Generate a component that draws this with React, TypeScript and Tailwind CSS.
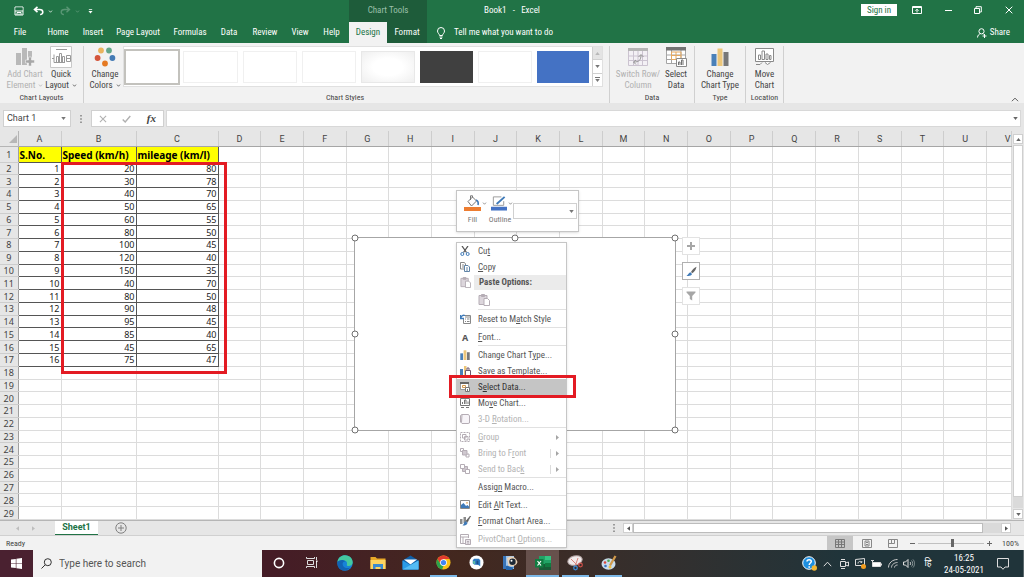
import type { ReactNode } from "react";
import clsx from "clsx";

const speed = [20, 30, 40, 50, 60, 80, 100, 120, 150, 40, 80, 90, 95, 85, 45, 75];
const mileage = [80, 78, 70, 65, 55, 50, 45, 40, 35, 70, 50, 48, 45, 40, 65, 47];
const columns = "ABCDEFGHIJKLMNOPQRSTUV".split("");
const rows = Array.from({ length: 29 }, (_, i) => i + 1);

export default function App() {
  return (
    <div className="relative flex h-screen min-h-[577px] flex-col overflow-hidden bg-[#e6e6e6] font-['Roboto_Condensed','Noto_Sans',sans-serif] text-[9px] leading-[11px] text-[#444]">
      <TitleBar />
      <TabStrip />
      <Ribbon />
      <FormulaBar />
      <div className="flex min-h-0 flex-1">
        <Sheet />
        <VerticalScroll />
      </div>
      <SheetTabs />
      <StatusBar />
      <Taskbar />

      {/* floating over the grid */}
      <ChartFrame />
      <MiniToolbar />
      <ContextMenu />
      <div className="pointer-events-none absolute top-[162px] left-[61px] h-[212px] w-[166px] border-3 border-[#e31b23]" />
      <div className="pointer-events-none absolute top-[375px] left-[449px] h-[23px] w-[127px] border-3 border-[#e31b23]" />
    </div>
  );
}

function Caret({ className }: { className?: string }) {
  return (
    <svg viewBox="0 0 6 4" className={clsx("h-[3px] w-[5px] shrink-0", className)} fill="none" stroke="currentColor">
      <path d="M1 .8 3 3 5 .8" />
    </svg>
  );
}

function Triangle({ className }: { className?: string }) {
  return (
    <svg viewBox="0 0 6 4" className={clsx("h-[3px] w-[5px] shrink-0", className)} fill="currentColor">
      <path d="M0 0h6L3 4z" />
    </svg>
  );
}

function TitleBar() {
  return (
    <header className="flex h-[22px] shrink-0 items-stretch bg-[#217346] text-white">
      <div className="flex w-[349px] items-center pl-[14px]">
        <button aria-label="Save">
          <svg viewBox="0 0 10 10" className="size-[10px]" fill="none" stroke="#fff">
            <path d="M1 1h8v8H1z" />
            <path d="M1.500 1.500h7v3h-7z" fill="#217346" stroke="none" />
            <path d="M1 5h8M3 9V6.500h4V9" />
            <path d="M4.500 7.500h1V9h-1z" fill="#fff" stroke="none" />
          </svg>
        </button>
        <button aria-label="Undo" className="ml-[9px]">
          <svg viewBox="0 0 11 10" className="h-[10px] w-[11px]" fill="none" stroke="#fff" strokeWidth="1.600">
            <path d="M4.500.8 1.500 3.500l3 2.700M1.800 3.500h4.700c4.400 0 4.200 5 .6 5" />
          </svg>
        </button>
        <Caret className="ml-[4px]" />
        <button aria-label="Redo" className="ml-[7px] opacity-25">
          <svg viewBox="0 0 11 10" className="h-[10px] w-[11px]" fill="none" stroke="#fff" strokeWidth="1.400">
            <path d="m6.500.8 3 2.700-3 2.700M9.200 3.500H4.500c-4.400 0-4.200 5-.6 5" />
          </svg>
        </button>
        <Caret className="ml-[4px] opacity-30" />
        <svg viewBox="0 0 6 6" className="ml-[8px] size-[5px]" fill="#fff">
          <path d="M1 0h4v1H1zM.5 2.500h5L3 5.500z" />
        </svg>
      </div>
      <div className="flex w-[78px] items-center justify-center bg-[#1e5c3a] pb-[2px] text-[#9cc0aa]">Chart Tools</div>
      <h1 className="flex w-[170px] items-center justify-center pb-[2px] whitespace-pre">Book1   -   Excel</h1>
      <div className="flex flex-1 items-center justify-end pb-[2px]">
        <button className="h-[12px] w-[36px] bg-white text-[#217346]">Sign in</button>
        <button aria-label="Ribbon display options" className="ml-[14px] flex w-[12px] justify-center">
          <svg viewBox="0 0 10 8" className="h-[8px] w-[10px]" fill="none" stroke="#fff">
            <path d="M.5.5h9v7h-9zM.5 1.500h9M5 6.500v-3M3.500 4.700 5 3.200l1.500 1.500" />
          </svg>
        </button>
        <button aria-label="Minimize" className="ml-[20px] flex w-[10px] justify-center">
          <span className="h-px w-[7px] bg-white" />
        </button>
        <button aria-label="Restore" className="ml-[20px] flex w-[10px] justify-center">
          <svg viewBox="0 0 8 8" className="size-[8px]" fill="none" stroke="#fff">
            <path d="M.5 2.500h5v5h-5zM2 2.500V.7h5.300V6H5.500" />
          </svg>
        </button>
        <button aria-label="Close" className="mr-[10px] ml-[21px] flex w-[10px] justify-center">
          <svg viewBox="0 0 8 8" className="size-[8px]" fill="none" stroke="#fff">
            <path d="m.7.7 6.600 6.600m0-6.600L.7 7.300" />
          </svg>
        </button>
      </div>
    </header>
  );
}

const tabs = [
  ["File", "w-[40px]"],
  ["Home", "w-[36px]"],
  ["Insert", "w-[34px]"],
  ["Page Layout", "w-[56px]"],
  ["Formulas", "w-[48px]"],
  ["Data", "w-[30px]"],
  ["Review", "w-[42px]"],
  ["View", "w-[28px]"],
  ["Help", "w-[35px]"],
];

function TabStrip() {
  return (
    <nav className="flex h-[21px] shrink-0 items-stretch bg-[#217346] text-white">
      {tabs.map(([label, width]) => (
        <button key={label} className={clsx("shrink-0 whitespace-nowrap", width)}>
          {label}
        </button>
      ))}
      <button className="w-[38px] bg-[#f2f2f2] text-[#217346]">Design</button>
      <button className="w-[40px] bg-[#1e5c3a]">Format</button>
      <button className="ml-[9px] flex items-center gap-[8px]">
        <svg viewBox="0 0 10 12" className="h-[12px] w-[10px]" fill="none" stroke="#fff">
          <path d="M3.500 8.500C3.500 6.800 1.500 6.200 1.500 4a3.500 3.500 0 0 1 7 0c0 2.200-2 2.800-2 4.500zM3.500 10h3M4 11.500h2" />
        </svg>
        Tell me what you want to do
      </button>
      <button className="mr-[14px] ml-auto flex items-center gap-[3px]">
        <svg viewBox="0 0 10 10" className="size-[10px]" fill="none" stroke="#fff">
          <circle cx="4.500" cy="3.300" r="2.600" />
          <path d="M.5 9.500C.7 7.300 2 6 3.500 5.700M5.500 5.700l1 .6M7.500 6v4M5.500 8h4" />
        </svg>
        Share
      </button>
    </nav>
  );
}

function Group({ label, className, children }: { label: string; className: string; children: ReactNode }) {
  return (
    <section className={clsx("flex flex-col border-r border-[#d0d0d0] text-center", className)}>
      <div className="flex flex-1 justify-center">{children}</div>
      <div className="text-[8px] leading-[10px]">{label}</div>
    </section>
  );
}

function BigButton({
  icon,
  lines,
  className,
  disabled,
  menu,
}: {
  icon: ReactNode;
  lines: [string, string];
  className: string;
  disabled?: boolean;
  menu?: boolean;
}) {
  return (
    <button
      disabled={disabled}
      className={clsx("flex shrink-0 flex-col items-center whitespace-nowrap", className, disabled && "text-[#b1b1b1]")}
    >
      <span className="mb-[1px] flex h-[22px] items-center">{icon}</span>
      <span>{lines[0]}</span>
      <span className="flex items-center gap-[3px]">
        {lines[1]}
        {menu && <Caret />}
      </span>
    </button>
  );
}

const styleThumbs = [
  "bg-white outline-2 outline-[#c3c2bd]",
  "bg-white border border-[#f0f0f0]",
  "bg-white border border-[#f0f0f0]",
  "bg-white border border-[#f0f0f0]",
  "bg-radial from-white from-40% to-[#efefef] border border-[#e8e8e8]",
  "bg-[#404040]",
  "bg-white border border-[#f0f0f0]",
  "bg-[#4472c4]",
];

function Ribbon() {
  return (
    <div className="flex h-[60px] shrink-0 bg-[#f2f2f2] pt-[3px]">
      <Group label="Chart Layouts" className="w-[84px]">
        <BigButton
          className="ml-[3px] w-[36px]"
          disabled
          menu
          lines={["Add Chart", "Element"]}
          icon={
            <svg viewBox="0 0 20 20" className="size-[20px]" fill="#b9b9b9">
              <path d="M1 6h5v12H1zM7 1h5v17H7zM13 4h4v7h-4z" />
              <path d="M13.500 10h3v3h3v3h-3v3h-3v-3h-3v-3h3z" fill="#a8a8a8" stroke="#f2f2f2" strokeWidth=".6" />
            </svg>
          }
        />
        <BigButton
          className="w-[36px]"
          menu
          lines={["Quick", "Layout"]}
          icon={
            <svg viewBox="0 0 22 22" className="size-[22px]" fill="none" stroke="#9a9a9a">
              <path d="M.5.5h21v21H.5z" fill="#fff" stroke="#c8c8c8" />
              <path d="M6 3.500h11M4 8.500v8h11M4 12.500H2M6.500 16.500v-6h2v6M9.500 16.500v-9h2v9M12.500 16.500v-6h2v6M16.500 9.500h4v6h-4zM16.500 12.500h4" />
            </svg>
          }
        />
      </Group>
      <Group label="Chart Styles" className="flex-1 pr-[6px] pl-[3px]">
        <BigButton
          className="w-[36px]"
          menu
          lines={["Change", "Colors"]}
          icon={
            <svg viewBox="0 0 22 20" className="h-[20px] w-[22px]">
              <circle cx="7" cy="3.500" r="2.900" fill="#ebb45e" />
              <circle cx="15" cy="3.500" r="2.900" fill="#64a689" />
              <circle cx="3.600" cy="11" r="2.900" fill="#d4553b" />
              <circle cx="18.400" cy="11" r="2.900" fill="#447bb5" />
              <circle cx="11" cy="16.500" r="2.900" fill="#e57a23" />
            </svg>
          }
        />
        <div className="flex h-[41px] flex-1 border border-[#e0e0e0] bg-white">
          <div className="flex flex-1 items-center justify-between gap-[5px] pr-[3px] pl-[2px]">
            {styleThumbs.map((look, i) => (
              <button key={i} aria-label={`Style ${i + 1}`} className={clsx("h-[32px] flex-1", look)} />
            ))}
          </div>
          <div className="flex w-[10px] flex-col divide-y divide-[#d0d0d0] border-l border-[#d0d0d0] text-[#777]">
            <button aria-label="Row up" className="flex flex-1 items-center justify-center bg-[#e4e4e4] text-[#b8b8b8]">
              <Triangle className="rotate-180" />
            </button>
            <button aria-label="Row down" className="flex flex-1 items-center justify-center">
              <Triangle />
            </button>
            <button aria-label="More styles" className="flex flex-1 flex-col items-center justify-center gap-[1px]">
              <span className="h-px w-[5px] bg-[#777]" />
              <Triangle />
            </button>
          </div>
        </div>
      </Group>
      <Group label="Data" className="w-[85px]">
        <BigButton
          className="ml-[4px] w-[44px]"
          disabled
          lines={["Switch Row/", "Column"]}
          icon={
            <svg viewBox="0 0 20 18" className="h-[18px] w-[20px]" fill="none" stroke="#cbc3d0">
              <path d="M.5.500h19v17H.5zM.5 8h19M.5 12.500h19M5.500 3v14M10 3v14M14.500 3v14" fill="#f3f0f5" />
              <path d="M0 0h20v3H0z" fill="#b5b5b5" stroke="none" />
              <path d="M6 14c5 0 7-2 7-7M10.500 9 13 6.500 15.500 9M8 12l-2.500 2L8 16.500" stroke="#969696" />
            </svg>
          }
        />
        <BigButton
          className="w-[32px]"
          lines={["Select", "Data"]}
          icon={
            <svg viewBox="0 0 21 20" className="h-[20px] w-[21px]" fill="none" stroke="#a5a5a5">
              <path d="M.5.5h19v16H.5zM.5 8h19M.5 12.500h19M5.500 3v13M15 3v13" fill="#fff" />
              <path d="M5.500 5h9.500v7.500H5.500zM5.500 8.500H15M10 5v7.500" stroke="#e5aa62" />
              <path d="M0 0h20v3.500H0z" fill="#737373" stroke="none" />
              <path d="M10.500 11.500h10v8h-10z" fill="#fff" stroke="#8a8a8a" />
              <path d="M12.500 18v-3h1.500v3M15.500 18v-5h1.500v5" stroke="#737373" />
            </svg>
          }
        />
      </Group>
      <Group label="Type" className="w-[51px]">
        <BigButton
          className="w-[48px]"
          lines={["Change", "Chart Type"]}
          icon={<BarsIcon className="size-[18px]" />}
        />
      </Group>
      <Group label="Location" className="w-[38px]">
        <BigButton
          className="w-[36px]"
          lines={["Move", "Chart"]}
          icon={
            <svg viewBox="0 0 19 18" className="h-[18px] w-[19px]" fill="none" stroke="#8a8a8a">
              <path d="M.5 13.500V.5h18v13zM1 16.500h4l2-2M10 14.500l2.500 2 3-2" fill="#fff" />
              <path d="M3.500 11.500V7h2v4.500zM7 11.500V3h2.500v8.500zM11 11.500V6h2v5.500zM14.500 11.500V7.500H16v4z" />
            </svg>
          }
        />
      </Group>
      <div className="flex w-[240px] items-end justify-end pr-[5px] pb-[1px]">
        <button aria-label="Collapse the ribbon">
          <svg viewBox="0 0 8 5" className="h-[5px] w-[8px]" fill="none" stroke="#666">
            <path d="m.8 4.200 3.200-3 3.200 3" />
          </svg>
        </button>
      </div>
    </div>
  );
}

function BarsIcon({ className }: { className: string }) {
  return (
    <svg viewBox="0 0 18 18" className={className}>
      <path d="M.5 6h5v12h-5z" fill="#4a80b8" />
      <path d="M6.500.5h5V18h-5z" fill="#ecc67a" />
      <path d="M12.500 4h5v14h-5z" fill="#787878" />
    </svg>
  );
}

function FormulaBar() {
  return (
    <div className="flex h-[28px] shrink-0 items-start pt-[7px] pl-[3px]">
      <div className="flex h-[17px] w-[68px] items-center border border-[#d0d0d0] bg-white pr-[4px]">
        <input
          aria-label="Name box"
          defaultValue="Chart 1"
          className="w-full min-w-0 flex-1 pl-[3px] font-['Roboto'] outline-none"
        />
        <Triangle className="text-[#777]" />
      </div>
      <svg viewBox="0 0 2 8" className="mt-[5px] ml-[9px] h-[8px] w-[2px]" fill="#999">
        <path d="M0 0h2v1.500H0zM0 3.200h2v1.500H0zM0 6.400h2V8H0z" />
      </svg>
      <div className="ml-[9px] flex h-[17px] w-[73px] items-center justify-between border border-[#d0d0d0] bg-white px-[7px]">
        <button aria-label="Cancel">
          <svg viewBox="0 0 9 9" className="size-[8px]" fill="none" stroke="#b0b0b0" strokeWidth="1.200">
            <path d="m1 1 7 7m0-7L1 8" />
          </svg>
        </button>
        <button aria-label="Enter">
          <svg viewBox="0 0 9 8" className="h-[8px] w-[9px]" fill="none" stroke="#b0b0b0" strokeWidth="1.400">
            <path d="m.7 4.500 2.500 2.500L8.300 1" />
          </svg>
        </button>
        <button aria-label="Insert function" className="font-['Liberation_Serif',serif] text-[11px] font-bold italic">
          fx
        </button>
      </div>
      <div className="mr-[3px] ml-[2px] flex h-[17px] flex-1 items-center border border-[#d8d8d8] bg-white pr-[2px]">
        <input aria-label="Formula bar" className="w-full min-w-0 flex-1 outline-none" />
        <Triangle className="text-[#666]" />
      </div>
    </div>
  );
}

const gridLine = "border-r border-b border-[#dcdcdc]";
const dataCell = "border-r border-b border-[#555]";

function Sheet() {
  return (
    <table className="h-full w-full min-w-0 flex-1 table-fixed border-collapse bg-white font-['Noto_Sans',sans-serif] text-[9px] leading-[10px]">
      <colgroup>
        <col className="w-[18px]" />
        <col className="w-[43px]" />
        <col className="w-[75px]" />
        <col className="w-[82px]" />
        {columns.slice(3, -1).map((c) => (
          <col key={c} />
        ))}
        <col className="w-[25px]" />
      </colgroup>
      <thead>
        <tr className="h-[15px] bg-[#e6e6e6] font-['Roboto',sans-serif]">
          <th className="border-r border-b border-[#b5b5b5] p-0">
            <svg viewBox="0 0 9 9" className="mt-[3px] ml-auto size-[9px]" fill="#b7b7b7">
              <path d="M8 0v8H0z" />
            </svg>
          </th>
          {columns.map((c) => (
            <th
              key={c}
              className={clsx(
                "border-r border-b border-r-[#cdcdcd] border-b-[#a6a6a6] p-0 pt-[2px] font-normal",
                c === "V" && "pl-[17px]"
              )}
            >
              {c}
            </th>
          ))}
        </tr>
      </thead>
      <tbody>
        {rows.map((r) => (
          <tr key={r} className={r === 1 ? "h-[16px]" : undefined}>
            <th className="border-r border-b border-r-[#9f9f9f] border-b-[#cdcdcd] bg-[#e6e6e6] p-0 pt-px font-normal">
              {r}
            </th>
            {columns.map((c, i) => (
              <Cell key={c} row={r} col={i} />
            ))}
          </tr>
        ))}
      </tbody>
    </table>
  );
}

function Cell({ row, col }: { row: number; col: number }) {
  if (row === 1 && col < 3) {
    return (
      <td
        className={clsx(
          dataCell,
          "bg-[#ffff00] p-0 pt-px pl-px text-left text-[10px] leading-[14px] font-bold whitespace-nowrap text-black"
        )}
      >
        {["S.No.", "Speed (km/h)", "mileage (km/l)"][col]}
      </td>
    );
  }
  if (row <= 17 && col < 3) {
    return (
      <td className={clsx(dataCell, "p-0 pt-px pr-px text-right text-[#222]")}>
        {[row - 1, speed[row - 2], mileage[row - 2]][col]}
      </td>
    );
  }
  return <td className={clsx(gridLine, "p-0")} />;
}

function VerticalScroll() {
  return (
    <div className="flex w-[12px] shrink-0 flex-col items-center gap-[1px] pt-[3px] pb-[1px] text-[#666]">
      <button aria-label="Scroll up" className="flex h-[10px] w-[10px] items-center justify-center border border-[#cfcfcf] bg-white">
        <Triangle className="rotate-180" />
      </button>
      <div className="w-[10px] flex-1 bg-[#dadada]">
        <div className="h-[97%] border border-[#cfcfcf] bg-white" />
      </div>
      <button aria-label="Scroll down" className="flex h-[10px] w-[10px] items-center justify-center border border-[#cfcfcf] bg-white">
        <Triangle />
      </button>
    </div>
  );
}

function SheetTabs() {
  return (
    <div className="flex h-[15px] shrink-0 items-start border-t border-[#b5b5b5]">
      <div className="flex w-[55px] items-center gap-[11px] self-center pl-[15px] text-[#bdbdbd]">
        <Triangle className="rotate-90" />
        <Triangle className="-rotate-90" />
      </div>
      <button className="h-[14px] w-[43px] border-b border-[#217346] bg-white font-['Roboto',sans-serif] font-bold text-[#217346]">
        Sheet1
      </button>
      <button aria-label="New sheet" className="mt-[1px] ml-[17px]">
        <svg viewBox="0 0 12 12" className="size-[12px]" fill="none" stroke="#808080">
          <circle cx="6" cy="6" r="5.200" />
          <path d="M6 3v6M3 6h6" />
        </svg>
      </button>
      <div className="flex-1" />
      <svg viewBox="0 0 2 8" className="mt-[3px] h-[8px] w-[2px]" fill="#999">
        <path d="M0 0h2v1.500H0zM0 3.200h2v1.500H0zM0 6.400h2V8H0z" />
      </svg>
      <div className="mt-[2px] mr-[13px] ml-[8px] flex h-[10px] w-[388px] text-[#555]">
        <button aria-label="Scroll left" className="flex w-[10px] items-center justify-center border border-[#cfcfcf] bg-white">
          <Triangle className="rotate-90" />
        </button>
        <div className="flex-1 bg-[#dadada] pr-[18px]">
          <div className="h-full border border-[#bcbcbc] bg-white" />
        </div>
        <button aria-label="Scroll right" className="flex w-[10px] items-center justify-center border border-[#cfcfcf] bg-white">
          <Triangle className="-rotate-90" />
        </button>
      </div>
    </div>
  );
}

function StatusBar() {
  return (
    <footer className="flex h-[15px] shrink-0 items-center border-t border-[#d0d0d0] bg-[#f2f2f2] pl-[6px] text-[8px]">
      <span className="flex-1">Ready</span>
      <button aria-label="Normal view" className="flex h-full w-[26px] items-center justify-center bg-[#c6c6c6]">
        <svg viewBox="0 0 10 9" className="h-[9px] w-[10px]" fill="none" stroke="#777">
          <path d="M.5.5h9v8h-9zM.5 3h9M.5 5.500h9M3.500.5v8M6.500.5v8" />
        </svg>
      </button>
      <button aria-label="Page layout view" className="flex w-[27px] justify-center">
        <svg viewBox="0 0 10 9" className="h-[9px] w-[10px]" fill="none" stroke="#888">
          <path d="M.5.5h9v8h-9zM3 2h4v5H3zM4 3.500h2M4 5.500h2" />
        </svg>
      </button>
      <button aria-label="Page break preview" className="flex w-[26px] justify-center">
        <svg viewBox="0 0 10 9" className="h-[9px] w-[10px]" fill="none" stroke="#888">
          <path d="M.5.5h9v8h-9zM3.500.5v4M6.500.5v4H.5" />
        </svg>
      </button>
      <button aria-label="Zoom out" className="ml-[4px] flex h-full w-[5px] items-center">
        <span className="h-px w-full bg-[#666]" />
      </button>
      <div className="relative mx-[3px] flex h-[8px] w-[66px] items-center">
        <div className="h-px w-full bg-[#c0c0c0]" />
        <div className="absolute left-1/2 h-[8px] w-[3px] bg-[#666]" />
      </div>
      <button aria-label="Zoom in">
        <svg viewBox="0 0 5 5" className="size-[5px]" stroke="#666">
          <path d="M2.500 0v5M0 2.500h5" />
        </svg>
      </button>
      <span className="w-[32px] pr-[5px] text-right">100%</span>
    </footer>
  );
}

function ChartFrame() {
  const handle = "absolute size-[7px] -translate-1/2 rounded-full border border-[#6f6f6f] bg-white";
  return (
    <div className="absolute top-[237px] left-[354px] h-[194px] w-[322px] border border-[#a6a6a6] bg-white">
      <span className={clsx(handle, "top-0 left-0")} />
      <span className={clsx(handle, "top-0 left-1/2")} />
      <span className={clsx(handle, "top-0 left-full")} />
      <span className={clsx(handle, "top-1/2 left-0")} />
      <span className={clsx(handle, "top-1/2 left-full")} />
      <span className={clsx(handle, "top-full left-0")} />
      <span className={clsx(handle, "top-full left-full")} />
      <div className="absolute top-[-1px] left-[327px] flex flex-col gap-[7px]">
        <button aria-label="Chart elements" className="flex size-[18px] items-center justify-center border border-[#e3e3e3] bg-white">
          <svg viewBox="0 0 8 8" className="size-[8px]" fill="#a6a6a6">
            <path d="M3 0h2v3h3v2H5v3H3V5H0V3h3z" />
          </svg>
        </button>
        <button aria-label="Chart styles" className="flex size-[18px] items-center justify-center border border-[#b0b0b0] bg-white">
          <svg viewBox="0 0 11 11" className="size-[11px]">
            <path d="M10.500.8C8 2 6 4 5 6l1.300 1.300C8.500 6 10 3.500 10.500.8z" fill="#666" />
            <path d="M4.400 6.300 6 8c-.8 2-3.200 2.300-5.500 1.700C2.200 9.200 2.300 6.800 4.400 6.300z" fill="#3f7ab8" />
          </svg>
        </button>
        <button aria-label="Chart filters" className="flex size-[18px] items-center justify-center border border-[#e3e3e3] bg-white">
          <svg viewBox="0 0 10 10" className="size-[10px]" fill="#a6a6a6">
            <path d="M.5.500h9v1L6.200 5v4.500L3.800 8V5L.5 1.500z" />
          </svg>
        </button>
      </div>
    </div>
  );
}

function MiniToolbar() {
  return (
    <div className="absolute top-[190px] left-[456px] flex h-[42px] w-[123px] border border-[#c6c6c6] bg-white pl-[4px] text-[8px] text-[#777] shadow-sm">
      <button className="flex w-[26px] flex-col pt-[4px] text-center">
        <span className="flex items-center gap-[1px] pl-[3px]">
          <svg viewBox="0 0 17 16" className="h-[16px] w-[17px]" fill="none" stroke="#777">
            <path d="M4 6.500 8.500 2l4 4-5 5zM8.500 2.500V.8h-2V5" />
            <path d="M12 5c2.500 1 2.500 3 2 5" stroke="#3f7ab8" strokeWidth="1.600" />
            <path d="M0 12h17v4H0z" fill="#ed7d31" stroke="none" />
          </svg>
          <Caret />
        </span>
        <span className="mt-[3px] w-[23px]">Fill</span>
      </button>
      <button className="flex w-[26px] flex-col pt-[4px] text-center">
        <span className="flex items-center gap-[1px] pl-[4px]">
          <svg viewBox="0 0 17 16" className="h-[16px] w-[17px]" fill="none" stroke="#999">
            <path d="M11 1.500H2.500v9h11V6" />
            <path d="m6 9 8.500-7.500" stroke="#3f7ab8" strokeWidth="2" />
            <path d="M0 12h17v4H0z" fill="#4472c4" stroke="none" />
          </svg>
          <Caret />
        </span>
        <span className="mt-[3px] w-[26px]">Outline</span>
      </button>
      <div className="relative mt-[12px] h-[16px] w-[64px]">
        <select aria-label="Chart element" className="h-full w-full appearance-none border border-[#d0d0d0] bg-white">
          <option></option>
        </select>
        <Triangle className="absolute top-[7px] right-[3px]" />
      </div>
    </div>
  );
}

function Accel({ text }: { text: string }) {
  // "_" marks the underlined access key
  const [before, after] = text.split("_");
  if (after === undefined) return <>{text}</>;
  return (
    <>
      {before}
      <u>{after[0]}</u>
      {after.slice(1)}
    </>
  );
}

function MenuItem({
  text,
  icon,
  disabled,
  active,
  submenu,
  split,
}: {
  text: string;
  icon?: ReactNode;
  disabled?: boolean;
  active?: boolean;
  submenu?: boolean;
  split?: boolean;
}) {
  return (
    <button
      role="menuitem"
      disabled={disabled}
      className={clsx(
        "flex h-[16px] w-full items-center text-left whitespace-nowrap",
        disabled ? "text-[#b3b3b3]" : active ? "text-[#333]" : "text-[#555]",
        active && "bg-[#c5c5c5]"
      )}
    >
      <span className="flex w-[21px] shrink-0 pl-[3px]">{icon}</span>
      <span className="flex-1">
        <Accel text={text} />
      </span>
      {split && <span className="mr-[5px] h-[9px] w-px bg-[#dcdcdc]" />}
      {submenu && (
        <svg viewBox="0 0 3 5" className="mr-[7px] h-[5px] w-[3px]" fill="#a5a5a5">
          <path d="M0 0v5l3-2.500z" />
        </svg>
      )}
    </button>
  );
}

function Separator() {
  return <div role="separator" className="mb-px ml-[21px] h-px bg-[#e1e1e1]" />;
}

function PasteIcon({ className }: { className: string }) {
  return (
    <svg viewBox="0 0 12 12" className={className} fill="#dcd6dc" stroke="#b5adb5">
      <path d="M1 1.500h8v9H1z" />
      <path d="M3.500.5h3v2h-3z" fill="#b5adb5" />
      <path d="M6 4.500h3.500l2 2v5H6z" fill="#fff" />
    </svg>
  );
}

function ContextMenu() {
  const sm = "size-[10px]";
  return (
    <div role="menu" className="absolute top-[242px] left-[456px] w-[111px] border border-[#c6c6c6] bg-white shadow-sm">
      <MenuItem
        text="Cu_t"
        icon={
          <svg viewBox="0 0 10 10" className={sm} fill="none" stroke="#555">
            <path d="M2 0l4.500 6.500M8 0 3.500 6.500" strokeWidth="1.300" />
            <circle cx="2.300" cy="8" r="1.500" stroke="#3f7ab8" />
            <circle cx="7.700" cy="8" r="1.500" stroke="#3f7ab8" />
          </svg>
        }
      />
      <MenuItem
        text="_Copy"
        icon={
          <svg viewBox="0 0 10 10" className={sm} fill="#fff" stroke="#888">
            <path d="M.5.500h4l1 1.500v5h-5zM2 3h2M2 5h2" />
            <path d="M4.500 3.500H8L9.500 5v4.500h-5zM6 6h2M6 8h2" stroke="#5f83a6" />
          </svg>
        }
      />
      <div className="flex h-[15px] items-center">
        <span className="flex w-[17px] pl-[3px]">
          <PasteIcon className="size-[11px]" />
        </span>
        <span className="flex h-full flex-1 items-center bg-[#ebebeb] pl-[5px] font-bold text-[#555]">Paste Options:</span>
      </div>
      <button aria-label="Paste" disabled className="flex h-[19px] items-center pl-[21px]">
        <PasteIcon className="size-[12px]" />
      </button>
      <Separator />
      <MenuItem
        text="Reset to M_atch Style"
        icon={
          <svg viewBox="0 0 11 10" className="h-[10px] w-[11px]" fill="none" stroke="#888">
            <path d="M4.500 1.500h6v8h-7V5M5 5h1M7 5h2.500M5 7.500h1M7 7.500h2.500M5 3h5" />
            <path d="M.5 1v3.500H4M.7 4.200C1.500 1.500 3 .8 5 1.500" stroke="#3f7ab8" strokeWidth="1.300" />
          </svg>
        }
      />
      <Separator />
      <MenuItem
        text="_Font..."
        icon={<span className="w-[10px] text-center font-['Noto_Sans',sans-serif] font-bold">A</span>}
      />
      <Separator />
      <MenuItem text="Change Chart T_ype..." icon={<BarsIcon className={sm} />} />
      <MenuItem
        text="_Save as Template..."
        icon={
          <svg viewBox="0 0 11 10" className="h-[10px] w-[11px]">
            <path d="M0 3h3v7H0z" fill="#4a80b8" />
            <path d="M4 0h2.500v10H4z" fill="#ecc67a" />
            <path d="M5.500 4.500h5v5h-5zM7 4.500V2h2v2.500" fill="#fff" stroke="#705a70" />
          </svg>
        }
      />
      <MenuItem
        text="S_elect Data..."
        active
        icon={
          <svg viewBox="0 0 10 10" className={sm} fill="#fff" stroke="#999">
            <path d="M.5.500h8v7h-8z" />
            <path d="M2.500 3.500h3v2h-3z" stroke="#d99a4c" />
            <path d="M0 0h9v2H0z" fill="#666" stroke="none" />
            <path d="M5.500 5.500h4v4h-4zM7.500 7v2" stroke="#777" />
          </svg>
        }
      />
      <MenuItem
        text="Mo_ve Chart..."
        icon={
          <svg viewBox="0 0 10 10" className={sm} fill="none" stroke="#777">
            <path d="M.5.500h9v7h-9zM2.500 6V4M4.500 6V2h1.500v4M8 6V3.500M1 9.500h3M6 9.500h3" />
          </svg>
        }
      />
      <MenuItem
        text="3-D _Rotation..."
        disabled
        icon={
          <svg viewBox="0 0 10 10" className={sm} fill="#f7f4f8" stroke="#b5adb5">
            <path d="M.5 1.500 2 .5h6.500L9.500 2v7l-1.500.5H2L.5 8zM2 .5 1.500 8.500" />
          </svg>
        }
      />
      <Separator />
      <MenuItem
        text="_Group"
        disabled
        submenu
        icon={
          <svg viewBox="0 0 10 10" className={sm} fill="none" stroke="#b5adb5">
            <path d="M.5.500h9v9h-9z" strokeDasharray="2 1" />
            <path d="M2.500 2.500h3.500v3.500H2.500zM4.500 4.500H8V8H4.500z" />
          </svg>
        }
      />
      <MenuItem
        text="Bring to F_ront"
        disabled
        submenu
        split
        icon={
          <svg viewBox="0 0 10 10" className={sm} fill="#fff" stroke="#b5adb5">
            <path d="M.5.500h3v3h-3zM6 6h3v3H6z" />
            <path d="M2.500 2.500h4.500v4.500H2.500z" fill="#cfc8cf" />
          </svg>
        }
      />
      <MenuItem
        text="Send to Bac_k"
        disabled
        submenu
        split
        icon={
          <svg viewBox="0 0 10 10" className={sm} fill="#fff" stroke="#b5adb5">
            <path d="M2.500 2.500h5v5h-5z" fill="#cfc8cf" />
            <path d="M.5.500h4v4h-4zM5.500 5.500h4v4h-4z" />
          </svg>
        }
      />
      <Separator />
      <MenuItem text="Assig_n Macro..." />
      <Separator />
      <MenuItem
        text="Edit _Alt Text..."
        icon={
          <svg viewBox="0 0 10 10" className={sm}>
            <path d="M.5.500h9v8h-9z" fill="#fff" stroke="#888" />
            <path d="M1 8V5l2.500-2 2.500 3 1.500-1L9 6.500V8z" fill="#3f7ab8" />
            <circle cx="7" cy="2.800" r=".9" fill="#e5aa62" />
          </svg>
        }
      />
      <MenuItem
        text="_Format Chart Area..."
        icon={
          <svg viewBox="0 0 11 10" className="h-[10px] w-[11px]">
            <path d="M0 3h2.500v5H0zM3.500 1H6v6H3.500z" fill="#8a8a8a" />
            <path d="M10.500 0 6 5l1.300 1.300z" fill="#555" stroke="#666" strokeWidth=".8" />
            <path d="M5.500 5 7.500 7C7 9 4.500 9.800 2.500 9.500c1.500-.8 1.500-3.500 3-4.500z" fill="#3f7ab8" />
          </svg>
        }
      />
      <Separator />
      <MenuItem
        text="PivotChart _Options..."
        disabled
        icon={
          <svg viewBox="0 0 11 11" className="size-[11px]" fill="none" stroke="#b5adb5">
            <path d="M5 9.500H.5v-9h8V4M.5 3h8M3 3v6.500" />
            <path d="M5.500 5.500h5v5h-5zM7 7.500h2M7 9h2" fill="#e8e3e8" />
          </svg>
        }
      />
    </div>
  );
}

function TaskApp({ label, open, active, children }: { label: string; open?: boolean; active?: boolean; children: ReactNode }) {
  return (
    <button
      aria-label={label}
      className={clsx("flex h-full w-[33px] shrink-0 flex-col items-center", active && "bg-[#67514c]")}
    >
      <span className="flex flex-1 items-center">{children}</span>
      <span className={clsx("h-[2px]", active ? "w-full" : "w-[27px]", open && "bg-[#7db9e8]")} />
    </button>
  );
}

function Taskbar() {
  return (
    <div className="flex h-[27px] shrink-0 items-center bg-linear-to-r from-[#451c26] from-27% via-[#43281f] via-45% to-[#20343a] to-82% text-white">
      <button aria-label="Start" className="flex h-full w-[33px] items-center justify-center bg-[#4a2130]">
        <svg viewBox="0 0 11 11" className="size-[11px]" fill="#fff">
          <path d="M0 1.600 4.800.9v4.300H0zM5.400.8 11 0v5.200H5.400zM0 5.800h4.800v4.300L0 9.400zM5.400 5.800H11V11l-5.600-.8z" />
        </svg>
      </button>
      <label className="flex h-full w-[229px] items-center gap-[7px] bg-[#f2f2f2] pl-[8px]">
        <svg viewBox="0 0 11 11" className="size-[11px]" fill="none" stroke="#333">
          <circle cx="6.800" cy="4.200" r="3.500" />
          <path d="M4.200 6.800.5 10.500" />
        </svg>
        <input
          aria-label="Search"
          placeholder="Type here to search"
          className="min-w-0 flex-1 font-['Roboto',sans-serif] text-[10px] outline-none placeholder:text-[#555]"
        />
      </label>
      <TaskApp label="Cortana">
        <svg viewBox="0 0 12 12" className="size-[12px]" fill="none" stroke="#fff" strokeWidth="1.600">
          <circle cx="6" cy="6" r="4.600" />
        </svg>
      </TaskApp>
      <TaskApp label="Task view">
        <svg viewBox="0 0 12 11" className="h-[11px] w-[12px]" fill="none" stroke="#ddd">
          <path d="M1.500 3.500h6v4h-6zM.5 0v1.500h8V0M.5 11V9.500h8V11M10.500 0v3M10.500 5v6" />
          <path d="M10 3.500h1.500V5H10z" fill="#fff" stroke="none" />
        </svg>
      </TaskApp>
      <TaskApp label="Edge">
        <svg viewBox="0 0 16 16" className="size-[16px]">
          <circle cx="8" cy="8" r="7.700" fill="#1683d8" />
          <path d="M.5 7C1 2.500 4.500.3 8 .3c5 0 7.700 3.700 7.700 7 0 3-2.700 4-4.700 3.700-1.200-.3-1.500-1-1-1.800C10.500 7 9 5.500 6.800 5.500 4 5.500 1.500 6 .5 7z" fill="#44c9a0" />
          <path d="M.5 7c1.500-2.500 6.500-2.800 8-.5C6 6 5 8.500 6 10.700c1.200 2.500 4.500 3 7.500 1.800C9 18-.5 16 .5 7z" fill="#1164b4" />
        </svg>
      </TaskApp>
      <TaskApp label="File Explorer">
        <svg viewBox="0 0 16 14" className="h-[14px] w-[16px]">
          <path d="M.5 1h5l1.500 1.500h8.500V13H.5z" fill="#e9a928" />
          <path d="M.5 4h15v9H.5z" fill="#fcd462" />
          <path d="M3 13V8h10v5h-2.500v-2h-5v2z" fill="#3a8ad0" />
        </svg>
      </TaskApp>
      <TaskApp label="Mail">
        <svg viewBox="0 0 17 15" className="h-[15px] w-[17px]">
          <path d="M.5 5.500 8.500.5l8 5V14.500H.5z" fill="#0f5fa8" />
          <path d="M2 4.500h13L8.500 9.500z" fill="#fff" />
          <path d="M.5 5.500 8.500 10l8-4.500v9H.5z" fill="#2a9be8" />
          <path d="M.5 14.500 16.500 5.500v9z" fill="#54bcf5" />
        </svg>
      </TaskApp>
      <TaskApp label="Chrome" open>
        <svg viewBox="0 0 16 16" className="size-[15px]">
          <circle cx="8" cy="8" r="7.500" fill="#fbc116" />
          <path d="M1.500 4.200a7.500 7.500 0 0 1 13 0H8L5 9.700z" fill="#e33b2e" />
          <path d="M1.500 4.200 5 9.800l3 1.600-1.500 4A7.500 7.500 0 0 1 1.500 4.200z" fill="#2ba24c" />
          <circle cx="8" cy="8" r="3.600" fill="#fff" />
          <circle cx="8" cy="8" r="2.800" fill="#4285f4" />
        </svg>
      </TaskApp>
      <TaskApp label="Remote app">
        <svg viewBox="0 0 16 16" className="size-[15px]">
          <circle cx="8" cy="8" r="7.500" fill="#fff" />
          <path d="M4 5.500 5.500 4h5L12 5.500V12l-2.500-1.500H6L4 9z" fill="#2f7cc4" />
          <path d="M8 6h2v4H8z" fill="#1c4f8b" />
          <path d="M4.500 6.500h2v3h-2z" fill="#5fc0a5" />
        </svg>
      </TaskApp>
      <TaskApp label="Media viewer">
        <svg viewBox="0 0 16 15" className="h-[15px] w-[16px]">
          <path d="M1 1h11v13H1z" fill="#9fc4ea" />
          <path d="M1 1h3v13H1z" fill="#3974b8" />
          <path d="M5 3c4-3 9-1 10.500 4-1 4-5 5-9 4z" fill="#e8d2b8" />
          <circle cx="10.500" cy="6.800" r="3.200" fill="#1c2836" />
          <circle cx="9.500" cy="5.800" r="1" fill="#fff" />
          <path d="M4 11c2-1 4 2 8 1l-2 3H4z" fill="#2566ad" />
        </svg>
      </TaskApp>
      <TaskApp label="Excel" open active>
        <svg viewBox="0 0 16 14" className="h-[14px] w-[16px]">
          <path d="M4 0h12v14H4z" fill="#21a366" />
          <path d="M10 0h6v4h-6z" fill="#33c481" />
          <path d="M4 8h12v6H4z" fill="#185c37" />
          <path d="M10 7h6v4h-6z" fill="#107c41" />
          <path d="M0 3h8.500v8.500H0z" fill="#107c41" />
          <path d="m2.500 5 3.500 4.500M6 5 2.500 9.500" stroke="#fff" strokeWidth="1.200" />
        </svg>
      </TaskApp>
      <TaskApp label="Snipping Tool" open>
        <svg viewBox="0 0 17 16" className="h-[16px] w-[17px]">
          <ellipse cx="8" cy="5.500" rx="7.300" ry="4.600" fill="#f1eaea" stroke="#b0a0a0" transform="rotate(-15 8 5.500)" />
          <path d="m4 4 6 6M11 3l-2.500 7" stroke="#d8857f" />
          <circle cx="8.500" cy="13" r="1.800" fill="none" stroke="#3d86d0" strokeWidth="1.300" />
          <circle cx="13.500" cy="10" r="1.800" fill="none" stroke="#d0504a" strokeWidth="1.200" />
        </svg>
      </TaskApp>
      <TaskApp label="Paint" open>
        <svg viewBox="0 0 16 16" className="size-[16px]">
          <ellipse cx="7.500" cy="9" rx="7" ry="5.800" fill="#c9dcec" />
          <circle cx="4" cy="7.500" r="1.300" fill="#d8463c" />
          <circle cx="7.500" cy="5.800" r="1.300" fill="#4fa84f" />
          <circle cx="4.500" cy="11" r="1.300" fill="#3a76c4" />
          <circle cx="9" cy="12" r="1.500" fill="#f0c040" />
          <path d="m8 10 5.500-9.500 2 1L10 11z" fill="#d19a4c" />
        </svg>
      </TaskApp>
      <Tray />
    </div>
  );
}

function Tray() {
  return (
    <div className="flex h-full flex-1 items-center justify-end">
      <svg viewBox="0 0 15 15" className="size-[15px]">
        <circle cx="7" cy="7" r="6.300" fill="#1d8fe0" stroke="#fff" />
        <path d="M5 5.500C5 3 9.300 3 9.300 5.500 9.300 7 7.200 7 7.200 9M7.200 10.300v1.400" fill="none" stroke="#fff" strokeWidth="1.500" />
        <circle cx="12.300" cy="12" r="2.700" fill="#f2b632" />
      </svg>
      <svg viewBox="0 0 9 6" className="ml-[6px] h-[6px] w-[9px]" fill="none" stroke="#ddd">
        <path d="m.8 5.200 3.700-4 3.700 4" />
      </svg>
      <svg viewBox="0 0 9 10" className="ml-[8px] h-[10px] w-[9px]" fill="none" stroke="#ddd">
        <path d="M.5 2.500h5v5h-5zM5.500 4l3-1v4l-3-1M1 .5h4M1 9.500h4" />
      </svg>
      <svg viewBox="0 0 11 11" className="ml-[6px] size-[11px]" fill="none" stroke="#ddd">
        <path d="M.5 1.500 9.500.500v7h-9zM3 5.500C3 3 6 3 6.500 4M6.800 3v1.500H5.500" />
        <circle cx="8.500" cy="8.500" r="2.500" fill="#f29d1f" stroke="none" />
      </svg>
      <svg viewBox="0 0 11 8" className="ml-[5px] h-[8px] w-[11px]">
        <path d="M1.500 2.500h8v4h-8z" fill="#fff" stroke="#ddd" />
        <path d="M10.500 3.500v2M0 .5h3M1.500 0v2.500" stroke="#ddd" />
      </svg>
      <svg viewBox="0 0 10 9" className="ml-[6px] h-[9px] w-[10px]" fill="none" stroke="#ccc">
        <path d="M.5 8.500C.5 4 4.500.5 9.500.5M3.500 8.500c0-3 3-5 6-5M6.500 8.500c0-1.500 1.500-2.500 3-2.500" />
      </svg>
      <svg viewBox="0 0 12 9" className="ml-[5px] h-[9px] w-[12px]" fill="none" stroke="#ddd">
        <path d="M.5 3v3H2.500l2.500 2.500v-8L2.500 3zM7 3c.8.8.8 2.200 0 3" />
        <path d="M8.500 1.500c1.600 1.600 1.600 4.400 0 6M10 .5c2 2.200 2 5.800 0 8" stroke="#8a9698" />
      </svg>
      <span className="ml-[8px] w-[10px] text-center">हि</span>
      <time className="ml-[10px] w-[42px] text-center leading-[12px]">
        16:25
        <br />
        24-05-2021
      </time>
      <button aria-label="Notifications" className="mr-[14px] ml-[12px]">
        <svg viewBox="0 0 12 12" className="size-[12px]" fill="none" stroke="#ddd">
          <path d="M.5.500h11v8.500H8L6 11.300 4 9H.5z" />
        </svg>
      </button>
      <span className="h-full w-px bg-[#5a686c]" />
    </div>
  );
}
